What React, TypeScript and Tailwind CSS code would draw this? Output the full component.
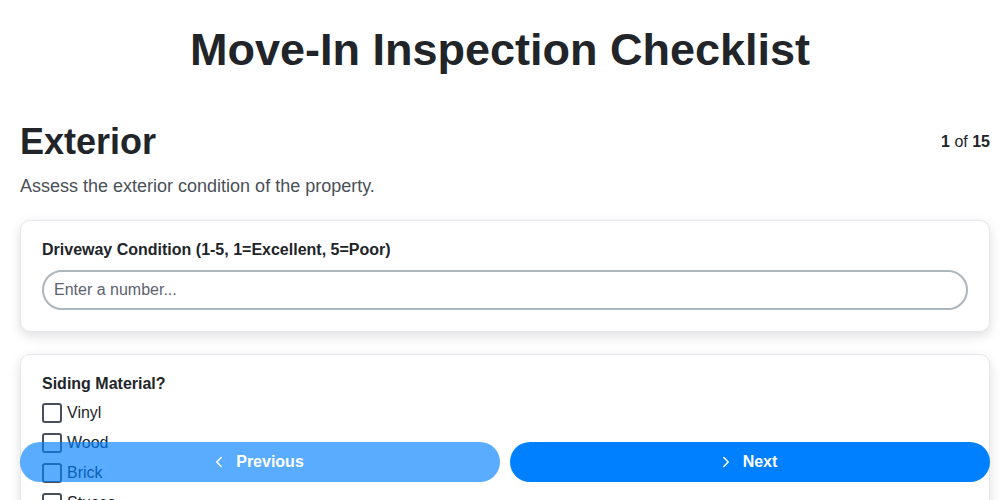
import { ChevronLeft, ChevronRight } from "lucide-react";

const sidingOptions = ["Vinyl", "Wood", "Brick", "Stucco", "Fiber Cement", "Other"];

export default function App() {
  return (
    <div className="min-h-screen bg-white text-[#212529] font-['Liberation_Sans',Arial,sans-serif]">
      <h1 className="pt-[23px] text-center text-[45px] leading-[54px] font-bold">
        Move-In Inspection Checklist
      </h1>

      <div className="pl-5 pr-[10px] pb-24">
        <div className="mt-[43px] flex items-center justify-between">
          <h2 className="text-[36px] leading-[43px] font-bold">Exterior</h2>
          <div className="text-base">
            <span className="font-bold">1</span> of <span className="font-bold">15</span>
          </div>
        </div>
        <p className="mt-[10px] text-[18px] leading-[27px] text-[#495057]">
          Assess the exterior condition of the property.
        </p>

        {/* question cards */}
        <div className="mt-5 flex flex-col gap-[22px]">
          <div className="rounded-[10px] border border-[#e6e7ec] bg-white px-[21px] pt-5 pb-[21px] shadow-[0_4px_12px_rgba(0,0,0,0.13)]">
            <label className="block text-base leading-[18px] font-bold mb-[11px]">
              Driveway Condition (1-5, 1=Excellent, 5=Poor)
            </label>
            <input
              type="text"
              placeholder="Enter a number..."
              className="h-10 w-full rounded-full border-2 border-[#adb5bd] bg-white px-[10px] text-base outline-none placeholder:text-[#5c6270]"
            />
          </div>

          <div className="rounded-[10px] border border-[#e6e7ec] bg-white px-[21px] pt-5 pb-[21px] shadow-[0_4px_12px_rgba(0,0,0,0.13)]">
            <div className="text-base leading-[18px] font-bold mb-[5px]">Siding Material?</div>
            <div className="flex flex-col">
              {sidingOptions.map((opt) => (
                <label key={opt} className="flex h-[30px] items-center gap-[5px] text-base">
                  <span className="h-5 w-5 rounded-[3px] border-2 border-[#4a4f5c] bg-white" />
                  {opt}
                </label>
              ))}
            </div>
          </div>
        </div>
      </div>

      {/* NAV BUTTONS */}
      <div className="fixed bottom-[18px] left-5 right-[10px] flex gap-[10px]">
        <button className="flex h-10 flex-1 items-center justify-center gap-2 rounded-full bg-[#0080ff] pr-[6px] text-base font-bold text-white opacity-65">
          <ChevronLeft size={18} strokeWidth={2} /> Previous
        </button>
        <button className="flex h-10 flex-1 items-center justify-center gap-2 rounded-full bg-[#0080ff] pr-[6px] text-base font-bold text-white">
          <ChevronRight size={18} strokeWidth={2} /> Next
        </button>
      </div>
    </div>
  );
}
